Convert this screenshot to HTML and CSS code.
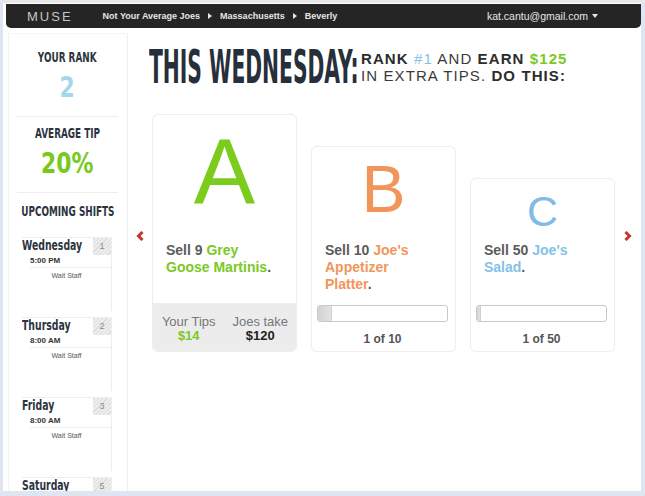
FILE: index.html
```html
<!DOCTYPE html>
<html lang="en">
<head>
<meta charset="utf-8">
<title>Muse</title>
<link rel="stylesheet" href="styles.css">
</head>
<body>
<div class="window">
  <header class="topbar">
    <span class="logo">MUSE</span>
    <nav class="crumbs">
      <span>Not Your Average Joes</span><i class="caret-r"></i>
      <span>Massachusetts</span><i class="caret-r"></i>
      <span>Beverly</span>
    </nav>
    <div class="account">kat.cantu@gmail.com<i class="caret-d"></i></div>
  </header>

  <div class="layout">
    <aside class="sidebar">
      <section class="stat stat-rank">
        <h3 class="side-title"><span>YOUR RANK</span></h3>
        <div class="stat-value rank"><span>2</span></div>
      </section>
      <section class="stat stat-tip">
        <h3 class="side-title"><span>AVERAGE TIP</span></h3>
        <div class="stat-value tip"><span>20%</span></div>
      </section>
      <section class="shifts">
        <h3 class="side-title"><span>UPCOMING SHIFTS</span></h3>
        <div class="shift-list">
          <div class="shift">
            <div class="shift-head"><span class="day">Wednesday</span><span class="num">1</span></div>
            <div class="time">5:00 PM</div>
            <div class="role">Wait Staff</div>
          </div>
          <div class="shift">
            <div class="shift-head"><span class="day">Thursday</span><span class="num">2</span></div>
            <div class="time">8:00 AM</div>
            <div class="role">Wait Staff</div>
          </div>
          <div class="shift">
            <div class="shift-head"><span class="day">Friday</span><span class="num">3</span></div>
            <div class="time">8:00 AM</div>
            <div class="role">Wait Staff</div>
          </div>
          <div class="shift">
            <div class="shift-head"><span class="day">Saturday</span><span class="num">5</span></div>
            <div class="time">8:00 AM</div>
            <div class="role">Wait Staff</div>
          </div>
        </div>
      </section>
    </aside>

    <main class="main">
      <div class="headline">
        <h1 class="big"><span>THIS WEDNESDAY:</span></h1>
        <p class="sub"><b>RANK</b> <span class="c-blue">#1</span> AND <b>EARN</b> <b class="c-green">$125</b><br>IN EXTRA TIPS. <b>DO THIS:</b></p>
      </div>

      <div class="carousel">
        <button class="arrow arrow-left" aria-label="Previous">
          <svg width="8" height="10" viewBox="0 0 8 10"><polyline points="6.5,1 2.5,5 6.5,9" fill="none" stroke="#c9342a" stroke-width="3"/></svg>
        </button>

        <div class="card">
          <div class="letter letter-a">A</div>
          <p class="task">Sell 9 <span class="c-green">Grey Goose Martinis</span>.</p>
          <div class="tips">
            <div><div class="tips-label">Your Tips</div><div class="tips-val c-green">$14</div></div>
            <div><div class="tips-label">Joes take</div><div class="tips-val">$120</div></div>
          </div>
        </div>

        <div class="card">
          <div class="letter letter-b">B</div>
          <p class="task">Sell 10 <span class="c-orange">Joe's Appetizer Platter</span>.</p>
          <div class="progress">
            <div class="bar"><div class="fill" style="width:10%"></div></div>
            <div class="count">1 of 10</div>
          </div>
        </div>

        <div class="card">
          <div class="letter letter-c">C</div>
          <p class="task">Sell 50 <span class="c-blue">Joe's Salad</span>.</p>
          <div class="progress">
            <div class="bar"><div class="fill" style="width:2%"></div></div>
            <div class="count">1 of 50</div>
          </div>
        </div>

        <button class="arrow arrow-right" aria-label="Next">
          <svg width="8" height="10" viewBox="0 0 8 10"><polyline points="1.5,1 5.5,5 1.5,9" fill="none" stroke="#c9342a" stroke-width="3"/></svg>
        </button>
      </div>
    </main>
  </div>
</div>
</body>
</html>
```

FILE: styles.css
```css
html, body {
  margin: 0;
  padding: 0;
}
body {
  background: linear-gradient(to bottom, #e8e8e8 0, #e8e8e8 3px, #dfe6f1 3px);
  font-family: "Liberation Sans", Arial, sans-serif;
  color: #333;
  height: 496px;
  overflow: hidden;
}
.window {
  margin: 3px 0 0 3px;
  width: 638px;
  height: 488px;
  background: #fff;
  overflow: hidden;
}

/* top bar */
.topbar {
  margin: 1px 0 0 3px;
  height: 24px;
  background: #252525;
  border-radius: 0 0 5px 5px;
  display: flex;
  align-items: center;
  padding: 0 43px 0 21px;
}
.logo {
  font-size: 13px;
  letter-spacing: 2px;
  color: #c4c4c4;
}
.crumbs {
  margin-left: 30px;
  display: flex;
  align-items: center;
  font-size: 9px;
  font-weight: bold;
  color: #e6e6e6;
}
.caret-r {
  width: 0;
  height: 0;
  border-left: 4px solid #e6e6e6;
  border-top: 3.5px solid transparent;
  border-bottom: 3.5px solid transparent;
  margin: 0 8px;
}
.account {
  margin-left: auto;
  display: flex;
  align-items: center;
  font-size: 10.5px;
  color: #e6e6e6;
}
.caret-d {
  width: 0;
  height: 0;
  border-top: 4px solid #e6e6e6;
  border-left: 3.5px solid transparent;
  border-right: 3.5px solid transparent;
  margin-left: 4px;
}

/* layout */
.layout {
  display: flex;
  margin-top: 5px;
  height: 463px;
}
.sidebar {
  width: 118px;
  margin-left: 5px;
  border-left: 1px solid #f1f3f5;
  border-right: 1px solid #eceef0;
  border-top: 1px solid #f5f6f7;
  flex-shrink: 0;
}
.side-title {
  margin: 0;
  display: flex;
  justify-content: center;
  white-space: nowrap;
  font-family: "Liberation Sans Narrow", "DejaVu Sans Condensed", sans-serif;
  font-weight: bold;
  font-size: 13.5px;
  line-height: 16px;
  color: #2c3440;
}
.side-title span {
  display: inline-block;
  transform: scaleX(0.73);
}
.stat {
  margin: 0 9px 0 8px;
  border-bottom: 1px solid #eeeeee;
  text-align: center;
}
.stat-rank { padding: 15px 0 14px; }
.stat-tip { padding: 8px 0 14px; }
.stat-value {
  margin-top: 7px;
  display: flex;
  justify-content: center;
  font-family: "Liberation Sans Narrow", "DejaVu Sans Condensed", sans-serif;
  font-weight: bold;
  font-size: 29px;
  line-height: 30px;
}
.stat-value span {
  display: inline-block;
  transform: scaleX(0.84);
}
.rank { color: #a6d6ea; }
.tip { color: #78c81e; }

.shifts {
  margin: 0 9px 0 8px;
  padding-top: 10px;
}
.shift-list {
  margin-top: 18px;
  padding-left: 5px;
}
.shift {
  width: 89px;
  height: 73px;
  border-top: 1px solid #eeeeee;
  border-right: 1px solid #eeeeee;
  margin-bottom: 6px;
}
.shift-head {
  display: flex;
  height: 17px;
}
.day {
  flex: 1;
  min-width: 0;
  white-space: nowrap;
  font-family: "Liberation Sans Narrow", "DejaVu Sans Condensed", sans-serif;
  font-weight: bold;
  font-size: 14px;
  line-height: 15px;
  color: #2c3440;
  transform: scaleX(0.74);
  transform-origin: 0 0;
}
.num {
  flex-shrink: 0;
  width: 18px;
  height: 17px;
  text-align: center;
  font-size: 9px;
  line-height: 17px;
  color: #888;
  background: repeating-linear-gradient(-45deg, #ededed 0, #ededed 2px, #dcdcdc 2px, #dcdcdc 3px);
}
.time {
  margin-left: 8px;
  font-size: 8px;
  font-weight: bold;
  line-height: 12px;
  color: #333;
  border-bottom: 1px solid #eeeeee;
}
.role {
  padding-top: 3px;
  font-size: 7px;
  line-height: 10px;
  color: #555;
  text-align: center;
}

/* main */
.main {
  flex: 1;
  padding: 14px 0 0 21px;
  min-width: 0;
}
.headline {
  display: flex;
  align-items: flex-start;
}
.big {
  margin: -3px 0 3px;
  width: 205px;
  height: 46px;
  font-family: "Liberation Sans Narrow", "DejaVu Sans Condensed", sans-serif;
  font-size: 46px;
  line-height: 46px;
  font-weight: bold;
  color: #272f3b;
  white-space: nowrap;
  flex-shrink: 0;
  overflow: visible;
}
.big span {
  display: inline-block;
  transform: scaleX(0.49);
  transform-origin: 0 0;
}
.sub {
  margin: 3px 0 0 7px;
  font-size: 15px;
  line-height: 17px;
  letter-spacing: 1.1px;
  color: #3a3a3a;
  white-space: nowrap;
}
.sub b { color: #2c2c2c; }
.c-blue { color: #84c2e8; }
.c-green { color: #7cc824; }
.c-orange { color: #f2955a; }
.sub .c-green { color: #7cc824; }

.carousel {
  margin: 21px 0 0 -21px;
  padding-left: 8px;
  display: flex;
  align-items: flex-end;
  gap: 14px;
}
.arrow {
  align-self: center;
  margin-top: 5px;
  border: 0;
  padding: 0;
  background: none;
  width: 8px;
  height: 10px;
  display: flex;
}
.arrow-left { margin-right: -6px; }
.arrow-right { margin-left: -5px; }

.card {
  width: 143px;
  border: 1px solid #eeeeee;
  border-radius: 6px;
  background: #fff;
  overflow: hidden;
  box-shadow: 0 0 2px rgba(0,0,0,0.03);
}
.letter {
  box-sizing: border-box;
  text-align: center;
  line-height: 1;
  font-family: "Liberation Sans", Arial, sans-serif;
}
.letter-a { height: 125px; padding-top: 11px; font-size: 92px; color: #7ccc1e; }
.letter-b { height: 93px; padding-top: 9px; font-size: 66px; color: #f2955a; }
.letter-c { height: 61px; padding-top: 11px; font-size: 43px; color: #7fbbe8; }

.task {
  margin: 0;
  height: 61px;
  padding: 2px 20px 0 13px;
  font-size: 14px;
  line-height: 17px;
  font-weight: bold;
  color: #5c5c5c;
}

.tips {
  height: 48px;
  box-sizing: border-box;
  padding-top: 12px;
  background: #ececec;
  display: grid;
  grid-template-columns: 1fr 1fr;
  text-align: center;
}
.tips-label {
  font-size: 13px;
  line-height: 14px;
  color: #777;
}
.tips-val {
  font-size: 13px;
  line-height: 14px;
  font-weight: bold;
  color: #222;
}
.tips-val.c-green { color: #7cc824; }

.progress {
  height: 48px;
  box-sizing: border-box;
  padding: 2px 7px 0 5px;
}
.bar {
  height: 17px;
  box-sizing: border-box;
  border: 1px solid #c9c9c9;
  border-radius: 3px;
  background: #fff;
  overflow: hidden;
}
.fill {
  height: 100%;
  min-width: 3px;
  background: linear-gradient(to right, #d2d2d2, #e2e2e2);
  border-right: 1px solid #d0d0d0;
}
.count {
  margin-top: 10px;
  text-align: center;
  font-size: 12px;
  line-height: 14px;
  font-weight: bold;
  color: #555;
}
```
